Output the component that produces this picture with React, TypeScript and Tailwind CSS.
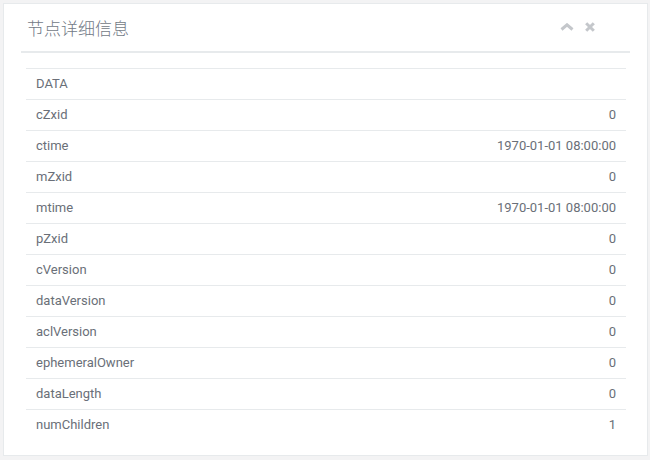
import React from "react";

const rows: [string, string][] = [
  ["DATA", ""],
  ["cZxid", "0"],
  ["ctime", "1970-01-01 08:00:00"],
  ["mZxid", "0"],
  ["mtime", "1970-01-01 08:00:00"],
  ["pZxid", "0"],
  ["cVersion", "0"],
  ["dataVersion", "0"],
  ["aclVersion", "0"],
  ["ephemeralOwner", "0"],
  ["dataLength", "0"],
  ["numChildren", "1"],
];

export default function App() {
  return (
    <div
      className="w-[650px] h-[460px] bg-[#f3f3f4] pt-[3px] pl-[3px]"
      style={{ fontFamily: "Roboto, 'Noto Sans CJK SC', sans-serif" }}
    >
      <div className="w-[645px] h-[453px] bg-white border border-[#e7eaec]">
        <div className="mx-[17px] h-[49px] border-b-2 border-[#e7eaec] flex items-center justify-between pl-[6px] pr-[35px]">
          <span className="text-[17px] text-[#727a86] font-light leading-none" style={{ fontFamily: "'Noto Sans CJK SC', sans-serif" }}>
            节点详细信息
          </span>
          <div className="flex items-center gap-[11px] mt-[-1px]">
            <svg width="14" height="8" viewBox="0 0 14 8">
              <polyline points="1.5,6.5 7,1.8 12.5,6.5" fill="none" stroke="#c4c7cb" strokeWidth="3" />
            </svg>
            <svg width="10" height="10" viewBox="0 0 10 10">
              <line x1="1.2" y1="1.2" x2="8.8" y2="8.8" stroke="#c4c7cb" strokeWidth="3" />
              <line x1="8.8" y1="1.2" x2="1.2" y2="8.8" stroke="#c4c7cb" strokeWidth="3" />
            </svg>
          </div>
        </div>
        <div className="ml-[22px] w-[600px] mt-[15px]">
          {rows.map(([k, v]) => (
            <div
              key={k}
              className="h-[31px] border-t border-[#e7eaec] flex items-center justify-between px-[10px] text-[13px] text-[#6a6f78]"
            >
              <span>{k}</span>
              <span>{v}</span>
            </div>
          ))}
        </div>
      </div>
    </div>
  );
}
